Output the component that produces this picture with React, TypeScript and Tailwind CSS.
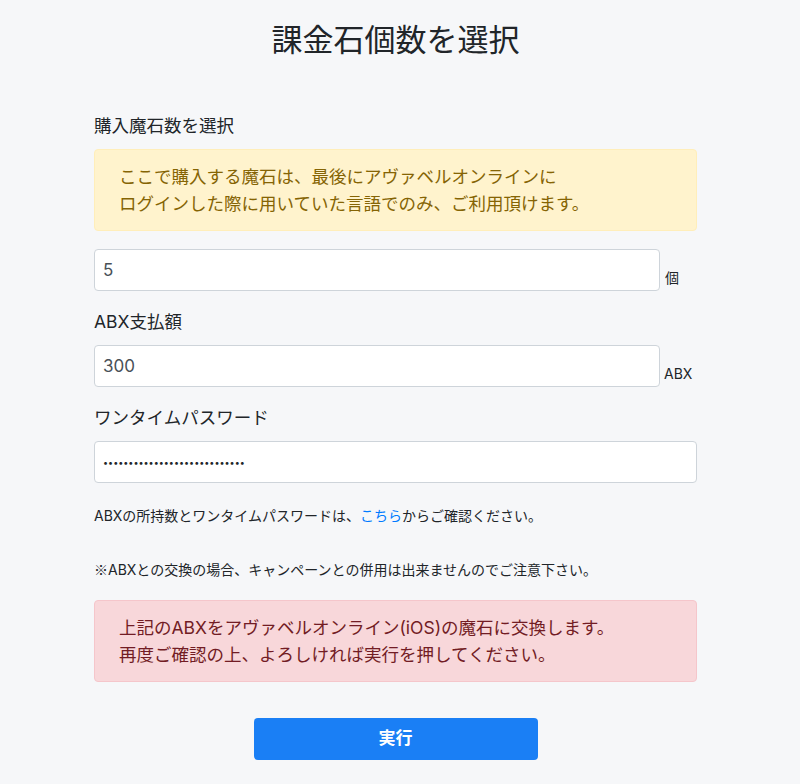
import React from 'react';

const font = { fontFamily: 'Inter, "Noto Sans CJK JP", sans-serif' };

export default function App() {
  return (
    <div className="min-h-[784px] bg-[#f6f7f9] pr-[9px] text-[#212529]" style={font}>
      <div className="mx-auto w-[603px]">
        {/* Heading */}
        <h1 className="pt-5 text-center text-[31px] font-normal leading-[40px]">課金石個数を選択</h1>

        <form className="flex flex-col" onSubmit={(e) => e.preventDefault()}>
          {/* Quantity */}
          <label className="mt-[53px] text-[17.5px] leading-[26px]">購入魔石数を選択</label>
          <div className="mt-[10px] rounded border border-[#ffeeba] bg-[#fff3cd] px-6 py-[13px] text-[17.5px] leading-[27px] text-[#856404]">
            ここで購入する魔石は、最後にアヴァベルオンラインに
            <br />
            ログインした際に用いていた言語でのみ、ご利用頂けます。
          </div>
          <div className="mt-[18px] flex items-end">
            <input
              type="text"
              defaultValue="5"
              className="h-[42px] w-[566px] rounded border border-[#ced4da] bg-white px-2 text-[17px] text-[#495057] outline-none"
            />
            <span className="mb-[3px] ml-[5px] text-[14px] leading-[20px]">個</span>
          </div>

          {/* Amount */}
          <label className="mt-[18px] text-[17.5px] leading-[26px]">ABX支払額</label>
          <div className="mt-[10px] flex items-end">
            <input
              type="text"
              defaultValue="300"
              className="h-[42px] w-[566px] rounded border border-[#ced4da] bg-white px-2 text-[17px] text-[#495057] outline-none"
            />
            <span className="mb-[3px] ml-[4px] text-[14px] leading-[20px]">ABX</span>
          </div>

          {/* Password */}
          <label className="mt-[18px] text-[17.5px] leading-[26px]">ワンタイムパスワード</label>
          <input
            type="password"
            defaultValue="abcdefghijklmnopqrstuvwxyz12"
            className="mt-[10px] h-[42px] w-full rounded border border-[#ced4da] bg-white px-2 text-[9px] text-[#212529] outline-none"
          />

          <p className="mt-[23px] text-[14px] leading-[20px]">
            ABXの所持数とワンタイムパスワードは、
            <a href="#" className="text-[#007bff]">こちら</a>
            からご確認ください。
          </p>

          <p className="mt-[33px] h-[20px] text-[14px] leading-[20px]">
            <span className="font-['Noto_Sans_CJK_JP']">※</span>
            ABXとの交換の場合、キャンペーンとの併用は出来ませんのでご注意下さい。
          </p>

          <div className="mt-[21px] rounded border border-[#f5c6cb] bg-[#f8d7da] px-6 py-[13px] text-[17.5px] leading-[27px] text-[#721c24]">
            上記のABXをアヴァベルオンライン(iOS)の魔石に交換します。
            <br />
            再度ご確認の上、よろしければ実行を押してください。
          </div>

          <button
            type="submit"
            className="mx-auto mt-[36px] h-[42px] w-[284px] rounded bg-[#1a7ff5] text-[17px] font-bold text-white"
          >
            実行
          </button>
        </form>
      </div>
    </div>
  );
}
